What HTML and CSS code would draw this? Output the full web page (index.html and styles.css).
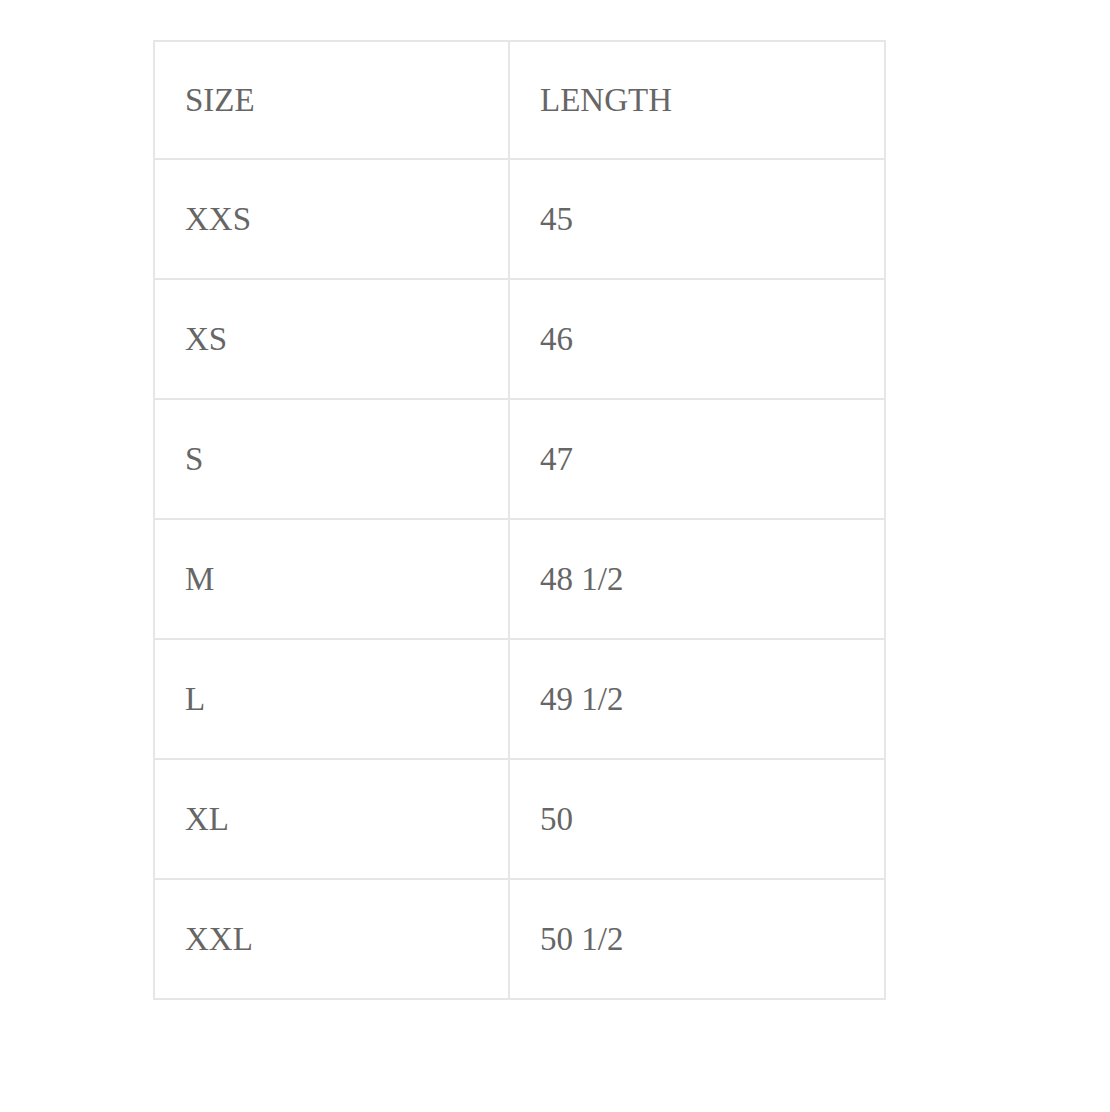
FILE: index.html
```html
<!DOCTYPE html>
<html>
<head>
<meta charset="utf-8">
<link rel="stylesheet" href="styles.css">
</head>
<body>
<div class="page">
  <table class="size-table">
    <tr><td>SIZE</td><td>LENGTH</td></tr>
    <tr><td>XXS</td><td>45</td></tr>
    <tr><td>XS</td><td>46</td></tr>
    <tr><td>S</td><td>47</td></tr>
    <tr><td>M</td><td>48 1/2</td></tr>
    <tr><td>L</td><td>49 1/2</td></tr>
    <tr><td>XL</td><td>50</td></tr>
    <tr><td>XXL</td><td>50 1/2</td></tr>
  </table>
</div>
</body>
</html>
```
FILE: styles.css
```css
html, body {
  margin: 0;
  padding: 0;
  background: #fff;
}
.page {
  padding: 40px 0 0 153px;
}
.size-table {
  border-spacing: 0;
  border-top: 2px solid #e6e6e6;
  border-left: 2px solid #e6e6e6;
  width: 733px;
  font-family: "Liberation Serif", serif;
  font-size: 33px;
  color: #666;
}
.size-table td {
  border-right: 2px solid #e6e6e6;
  border-bottom: 2px solid #e6e6e6;
  height: 118px;
  padding: 0 0 0 30px;
  box-sizing: border-box;
  vertical-align: middle;
  line-height: 1;
}
.size-table td:first-child {
  width: 355px;
}
.size-table tr:first-child td {
  height: 118px;
}
.size-table td {
  height: 120px;
}
```
